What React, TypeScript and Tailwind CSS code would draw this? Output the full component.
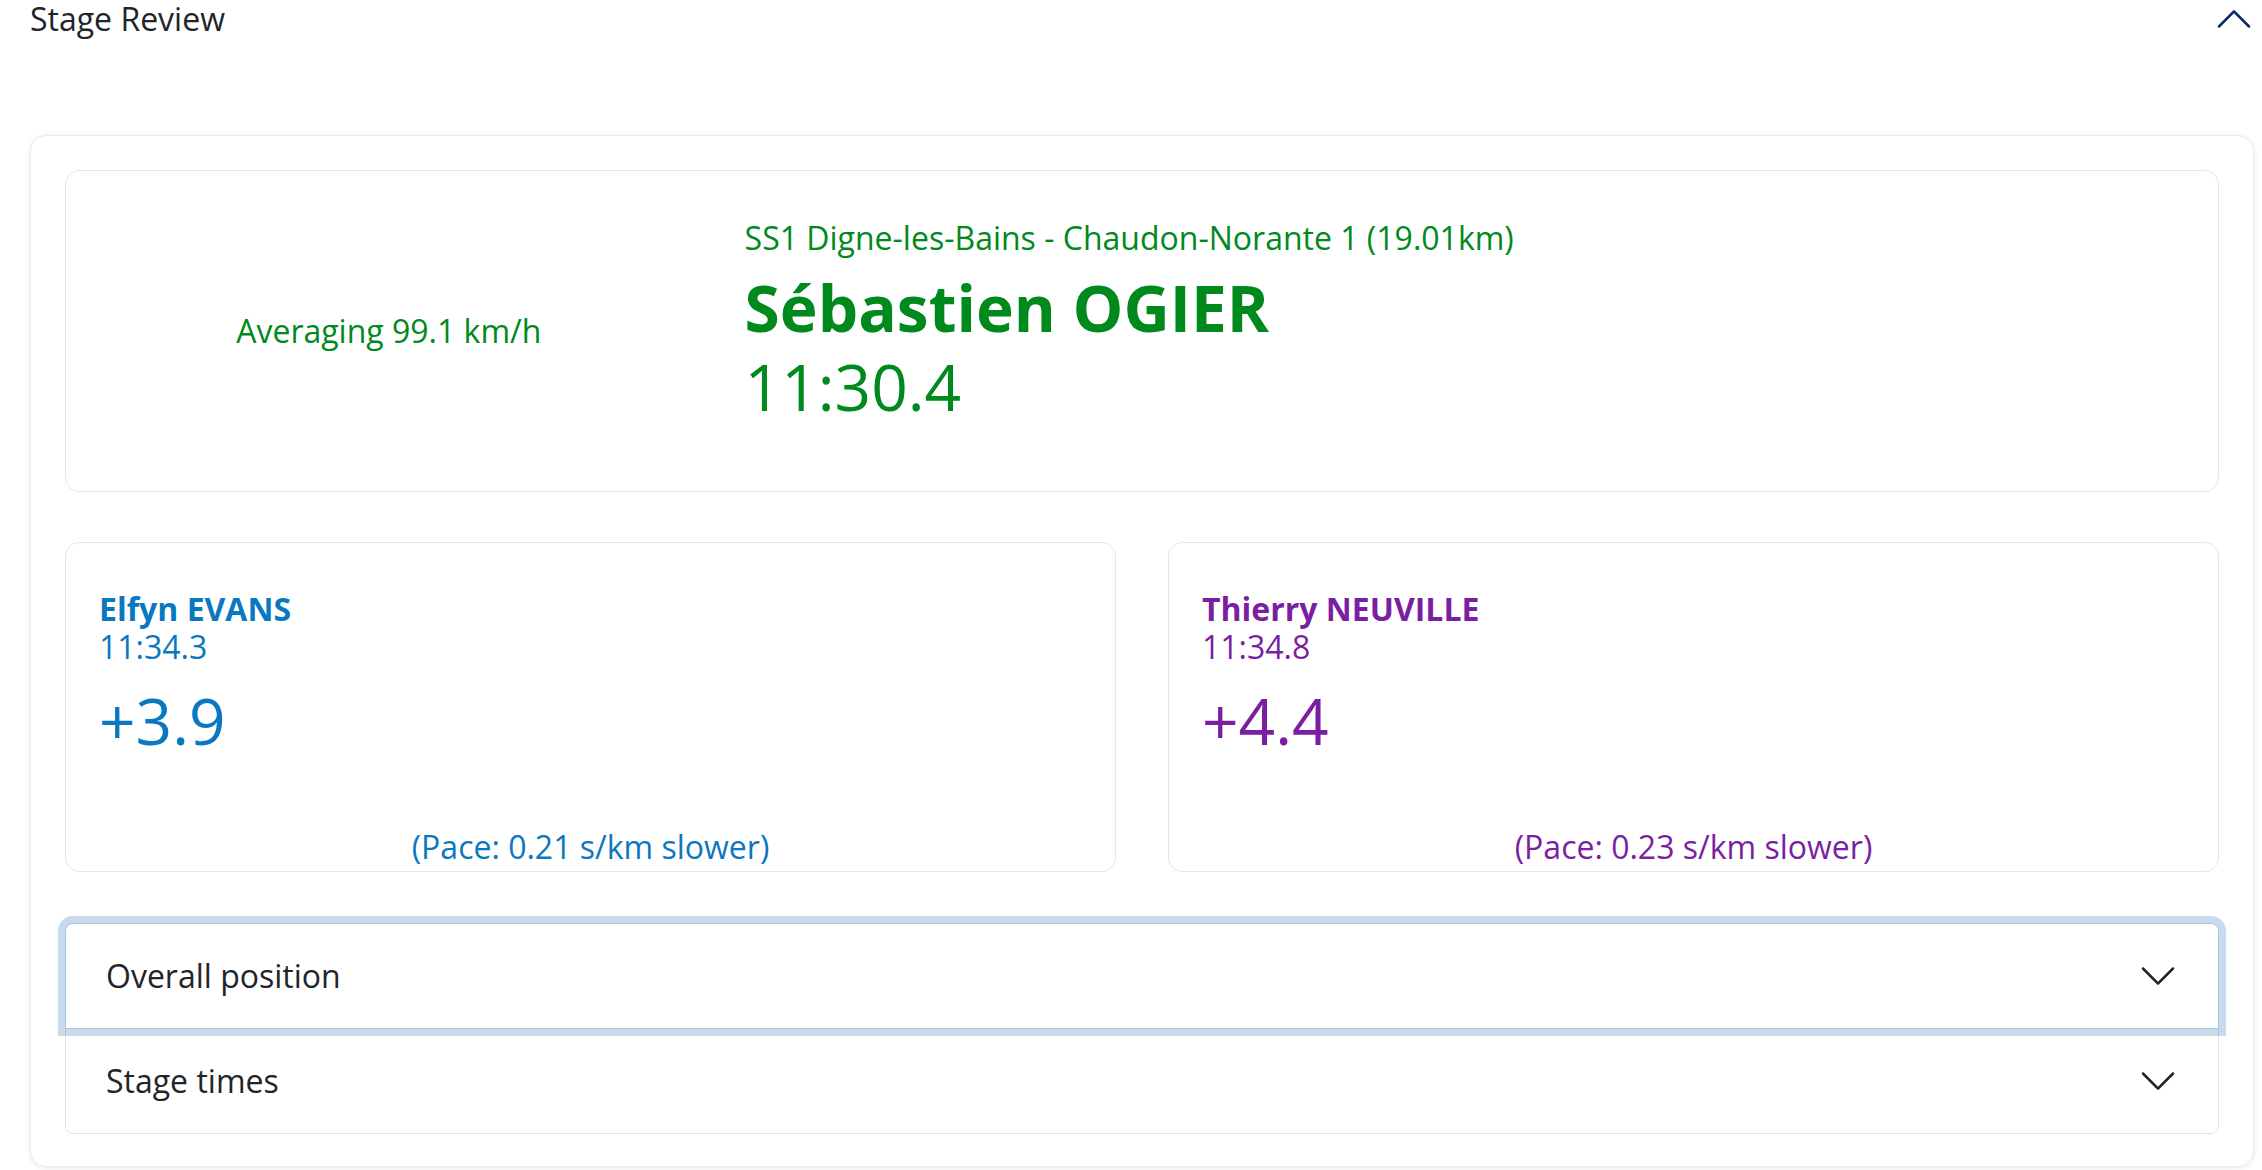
import React from "react";

const Chevron = ({ className }: { className?: string }) => (
  <svg viewBox="0 0 16 16" className={className} fill="currentColor" aria-hidden="true">
    <path
      fillRule="evenodd"
      d="M1.646 4.646a.5.5 0 0 1 .708 0L8 10.293l5.646-5.647a.5.5 0 0 1 .708.708l-6 6a.5.5 0 0 1-.708 0l-6-6a.5.5 0 0 1 0-.708z"
    />
  </svg>
);

type Rival = { name: string; time: string; delta: string; pace: string; color: string };

const RivalCard = ({ r }: { r: Rival }) => (
  <div
    className={`flex h-[330px] flex-col rounded-[14px] border border-[#e6e6e6] px-[33px] pt-[47px] ${r.color}`}
  >
    <div className="text-[32px] font-bold leading-[1.2]">{r.name}</div>
    <div className="text-[32px] leading-[1.2]">{r.time}</div>
    <div className="mt-[16px] text-[64px] leading-[1.2]">{r.delta}</div>
    <div className="mt-auto text-center text-[32px] leading-[48px]">{r.pace}</div>
  </div>
);

export default function App() {
  const rivals: Rival[] = [
    {
      name: "Elfyn EVANS",
      time: "11:34.3",
      delta: "+3.9",
      pace: "(Pace: 0.21 s/km slower)",
      color: "text-[#0a78c0]",
    },
    {
      name: "Thierry NEUVILLE",
      time: "11:34.8",
      delta: "+4.4",
      pace: "(Pace: 0.23 s/km slower)",
      color: "text-[#7b1fa2]",
    },
  ];

  return (
    <div className="min-h-screen bg-white pl-[30px] pr-[8px] font-['Open_Sans',sans-serif] text-[#212529]">
      <div className="flex h-[38px] items-center justify-between">
        <span className="text-[32px] leading-[48px]">Stage Review</span>
        <Chevron className="h-[40px] w-[40px] rotate-180 text-[#052c65]" />
      </div>

      <div className="mt-[97px] flex flex-col rounded-[16px] border border-[#ebebeb] px-[34px] pb-[32px] pt-[34px] shadow-[0_1px_5px_rgba(0,0,0,0.10)]">
        <div className="grid h-[322px] grid-cols-[3fr_7fr] rounded-[14px] border border-[#e6e6e6] text-[#00891d]">
          <div className="flex items-center justify-center text-[32px] leading-[48px]">
            Averaging 99.1 km/h
          </div>
          <div className="pl-[33px] pt-[43px]">
            <div className="text-[32px] leading-[48px]">
              SS1 Digne-les-Bains - Chaudon-Norante 1 (19.01km)
            </div>
            <div className="mt-[6px] text-[64px] font-bold leading-[80px]">Sébastien OGIER</div>
            <div className="text-[64px] leading-[77px]">11:30.4</div>
          </div>
        </div>

        <div className="mt-[50px] grid grid-cols-2 gap-[52px]">
          {rivals.map((r) => (
            <RivalCard key={r.name} r={r} />
          ))}
        </div>

        <div className="mt-[51px] rounded-[8px] border border-[#dee2e6]">
          <button className="relative z-10 flex w-full items-center justify-between rounded-t-[7px] bg-white px-[40px] py-[28px] text-left text-[32px] leading-[48px] text-[#212529] shadow-[0_0_0_8px_rgba(30,110,180,0.25)]">
            <span>Overall position</span>
            <Chevron className="h-[40px] w-[40px] text-[#212529]" />
          </button>
          <div className="border-t border-[#dee2e6]">
            <button className="flex w-full items-center justify-between rounded-b-[7px] bg-white px-[40px] py-[28px] text-left text-[32px] leading-[48px] text-[#212529]">
              <span>Stage times</span>
              <Chevron className="h-[40px] w-[40px] text-[#212529]" />
            </button>
          </div>
        </div>
      </div>
    </div>
  );
}
